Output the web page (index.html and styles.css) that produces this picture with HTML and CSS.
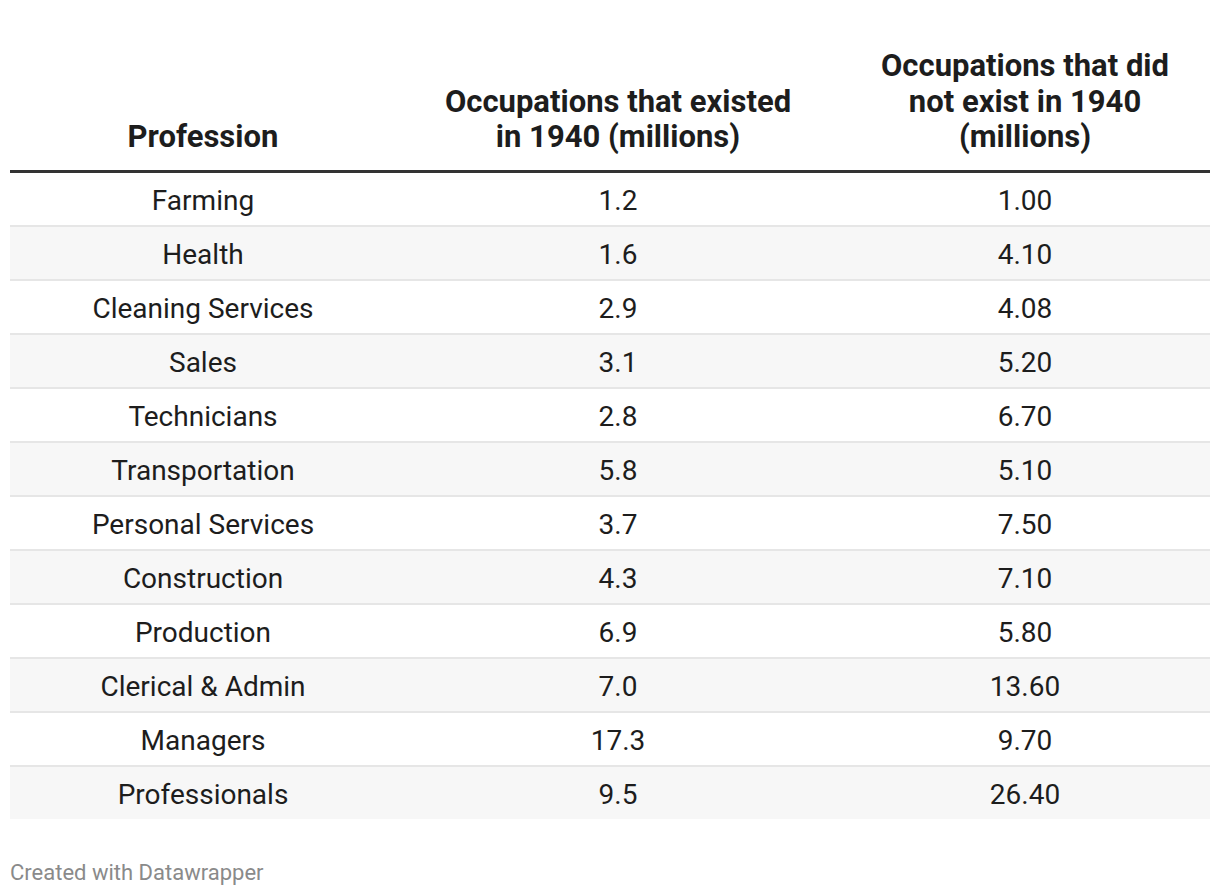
FILE: index.html
```html
<!DOCTYPE html>
<html lang="en">
<head>
<meta charset="utf-8">
<title>Occupations</title>
<link rel="stylesheet" href="styles.css">
</head>
<body>
<div class="chart">
  <table class="dw-table">
    <colgroup>
      <col class="c1"><col class="c2"><col class="c3">
    </colgroup>
    <thead>
      <tr>
        <th>Profession</th>
        <th>Occupations that existed<br>in 1940 (millions)</th>
        <th>Occupations that did<br>not exist in 1940<br>(millions)</th>
      </tr>
    </thead>
    <tbody>
      <tr><td>Farming</td><td>1.2</td><td>1.00</td></tr>
      <tr><td>Health</td><td>1.6</td><td>4.10</td></tr>
      <tr><td>Cleaning Services</td><td>2.9</td><td>4.08</td></tr>
      <tr><td>Sales</td><td>3.1</td><td>5.20</td></tr>
      <tr><td>Technicians</td><td>2.8</td><td>6.70</td></tr>
      <tr><td>Transportation</td><td>5.8</td><td>5.10</td></tr>
      <tr><td>Personal Services</td><td>3.7</td><td>7.50</td></tr>
      <tr><td>Construction</td><td>4.3</td><td>7.10</td></tr>
      <tr><td>Production</td><td>6.9</td><td>5.80</td></tr>
      <tr><td>Clerical &amp; Admin</td><td>7.0</td><td>13.60</td></tr>
      <tr><td>Managers</td><td>17.3</td><td>9.70</td></tr>
      <tr><td>Professionals</td><td>9.5</td><td>26.40</td></tr>
    </tbody>
  </table>
  <div class="footer">Created with Datawrapper</div>
</div>
</body>
</html>
```

FILE: styles.css
```css
html, body {
  margin: 0;
  padding: 0;
  background: #ffffff;
}
body {
  font-family: Roboto, "Liberation Sans", sans-serif;
  color: #1d1d1d;
}
.chart {
  padding: 48px 10px 0 10px;
}
.dw-table {
  width: 1200px;
  border-collapse: collapse;
  table-layout: fixed;
}
.c1 { width: 386px; }
.c2 { width: 444px; }
.c3 { width: 370px; }
.dw-table th {
  font-weight: 700;
  font-size: 31px;
  line-height: 35.5px;
  text-align: center;
  vertical-align: bottom;
  padding: 0 0 15px 0;
  border-bottom: 3px solid #333333;
  color: #1d1d1d;
}
.dw-table td {
  font-size: 28px;
  height: 49px;
  padding: 3px 0 0 0;
  text-align: center;
  vertical-align: middle;
  border-bottom: 2px solid #e6e6e6;
  color: #1d1d1d;
}
.dw-table tbody tr:nth-child(even) td {
  background: #f7f7f7;
}
.dw-table tbody tr:last-child td {
  border-bottom: none;
}
.footer {
  margin-top: 41px;
  font-size: 22px;
  color: #8a8a8a;
}
```
